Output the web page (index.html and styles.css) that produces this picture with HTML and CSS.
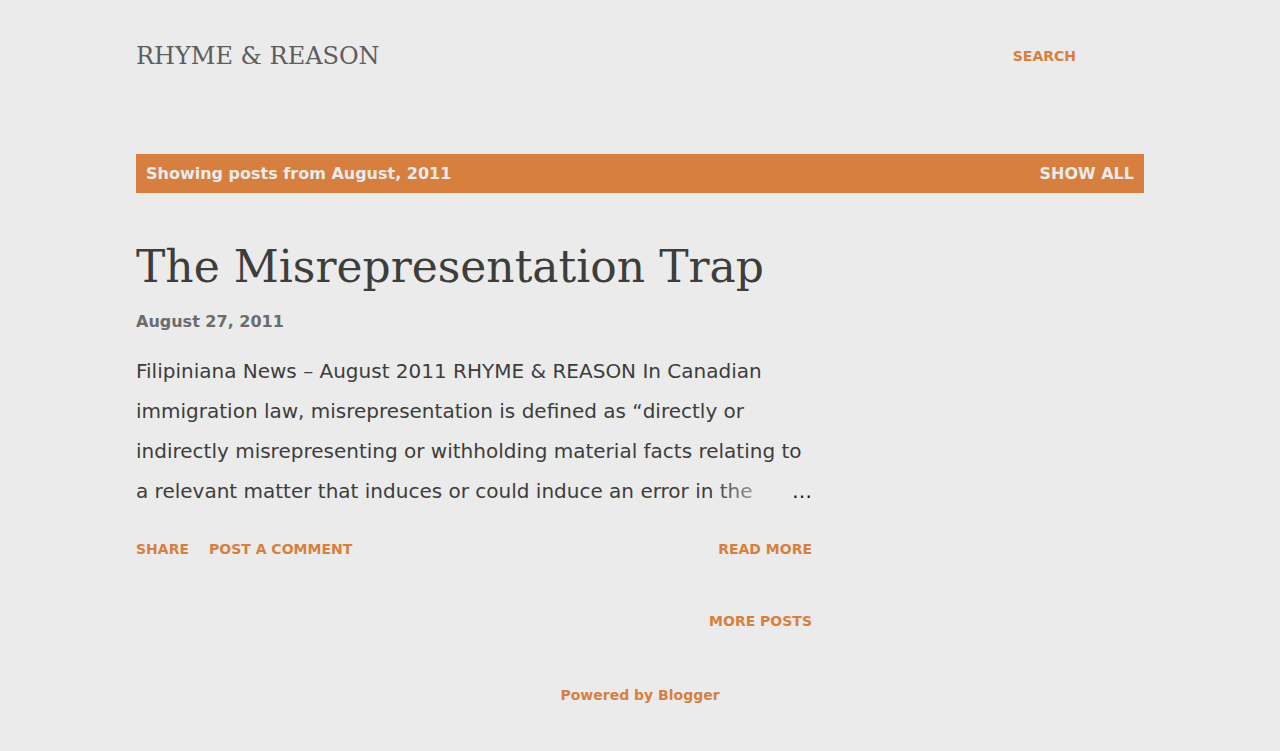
FILE: index.html
```html
<!DOCTYPE html>
<html lang="en">
<head>
<meta charset="utf-8">
<meta name="viewport" content="width=device-width, initial-scale=1">
<title>Rhyme &amp; Reason</title>
<link rel="stylesheet" href="styles.css">
</head>
<body>
<div class="page">
  <header class="header">
    <h1 class="blog-title"><a href="#">RHYME &amp; REASON</a></h1>
    <button class="action search" type="button">Search</button>
  </header>
  <main>
    <div class="message">
      <span>Showing posts from August, 2011</span>
      <a href="#">SHOW ALL</a>
    </div>
    <div class="column">
      <article>
        <h2 class="post-title"><a href="#">The Misrepresentation Trap</a></h2>
        <time class="post-date" datetime="2011-08-27">August 27, 2011</time>
        <p class="snippet">Filipiniana News – August 2011 RHYME &amp; REASON In Canadian immigration law, misrepresentation is defined as “directly or indirectly misrepresenting or withholding material facts relating to a relevant matter that induces or could induce an error in the <span class="snippet-more">…</span></p>
        <div class="post-footer">
          <button class="action" type="button">Share</button>
          <a class="action" href="#">Post a Comment</a>
          <a class="action read-more" href="#">Read more</a>
        </div>
      </article>
      <nav class="pager"><a class="action" href="#">More posts</a></nav>
    </div>
  </main>
  <footer class="footer"><a href="#">Powered by Blogger</a></footer>
</div>
</body>
</html>
```
FILE: styles.css
```css
* {
  box-sizing: border-box;
}

body {
  margin: 0;
  background: #ebebeb;
  color: #3d3d3b;
  font-family: "DejaVu Sans", sans-serif;
}

a {
  color: inherit;
  text-decoration: none;
}

.page {
  max-width: 1008px;
  margin: 0 auto;
}

.header {
  display: flex;
  align-items: center;
  justify-content: space-between;
  height: 112px;
  padding-right: 68px;
}

.blog-title {
  margin: 0;
  color: #5d5d60;
  font: 400 24px/28px "DejaVu Serif", serif;
}

.action {
  padding: 0;
  border: 0;
  background: none;
  color: #d77f3f;
  font: bold 14px/18px "DejaVu Sans", sans-serif;
  text-transform: uppercase;
  cursor: pointer;
}

.message {
  display: flex;
  justify-content: space-between;
  margin-top: 42px;
  padding: 10px;
  background: #d77f3f;
  color: #ebebeb;
  font-size: 16px;
  font-weight: bold;
  line-height: 19px;
}

.column {
  max-width: 676px;
  padding-top: 44px;
}

.post-title {
  margin: 0;
  font: 400 44px/60px "DejaVu Serif", serif;
}

.post-date {
  display: block;
  margin-top: 15px;
  color: #6c6c6c;
  font-size: 16px;
  font-weight: bold;
  line-height: 19px;
}

.snippet {
  position: relative;
  margin: 20px 0 0;
  font-size: 20px;
  line-height: 40px;
}

/* Fades out the end of the last line */
.snippet::after {
  content: "";
  position: absolute;
  right: 20px;
  bottom: 0;
  width: 80px;
  height: 40px;
  background: linear-gradient(to right, transparent, #ebebeb);
}

.snippet-more {
  float: right;
  color: #1c1c1c;
}

.post-footer {
  display: flex;
  gap: 20px;
  margin-top: 29px;
}

.read-more {
  margin-left: auto;
}

.pager {
  display: flex;
  justify-content: flex-end;
  margin-top: 54px;
}

.footer {
  padding: 56px 0 48px;
  color: #d77f3f;
  font-size: 14px;
  font-weight: bold;
  line-height: 18px;
  text-align: center;
}
```
